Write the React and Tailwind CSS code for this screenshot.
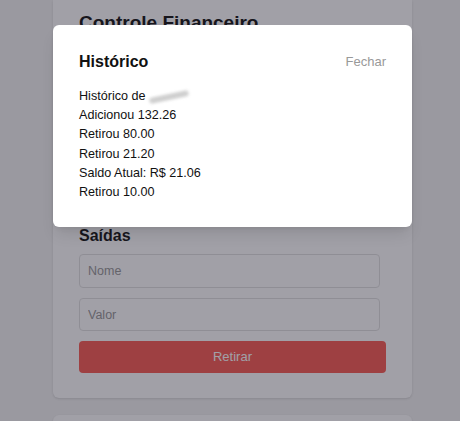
import { useState } from "react";

function Campo({ placeholder, alto }) {
  return (
    <input
      type="text"
      placeholder={placeholder}
      className={
        "block w-[301px] px-2 rounded border border-[#e2e2e2] bg-white text-[12.5px] text-[#333] placeholder:text-[#9a9a9a] outline-none " +
        (alto ? "h-[34px]" : "h-[33px]")
      }
    />
  );
}

function Secao({ titulo, botao, cor }) {
  return (
    <div className="flex flex-col">
      <h3 className="text-[16px] leading-[20px] font-bold text-[#1a1a1a] mb-[8px]">{titulo}</h3>
      <div className="flex flex-col gap-[10px]">
        <Campo placeholder="Nome" alto />
        <Campo placeholder="Valor" />
        <button className={"w-full h-[32px] rounded text-white text-[13px] " + cor}>{botao}</button>
      </div>
    </div>
  );
}

export default function App() {
  const [aberto, setAberto] = useState(true);

  const historico = [
    "Adicionou 132.26",
    "Retirou 80.00",
    "Retirou 21.20",
    "Saldo Atual: R$ 21.06",
    "Retirou 10.00",
  ];

  return (
    <div className="relative h-[421px] overflow-hidden bg-[#f4f4f4] font-['Liberation_Sans',Arial,sans-serif]">
      <div className="ml-[53px] w-[359px] flex flex-col gap-[17px]">
        {/* Card principal */}
        <div className="bg-white rounded-b-md shadow px-[26px] pt-[10px] pb-[25px] flex flex-col">
          <h2 className="text-[19px] leading-[26px] font-bold text-[#1a1a1a] mb-[24px]">Controle Financeiro</h2>
          <div className="mb-[19px]">
            <Secao titulo="Entradas" botao="Adicionar" cor="bg-[#4caf50]" />
          </div>
          <Secao titulo="Saídas" botao="Retirar" cor="bg-[#fa6057]" />
        </div>
        <div className="bg-white rounded-t-md shadow h-[40px]" />
      </div>

      {aberto && (
        <div className="absolute inset-0 bg-[rgba(20,18,35,0.4)]">
          <div className="absolute left-[53px] top-[25px] w-[359px] h-[202px] bg-white rounded-md shadow-lg px-[26px] pt-[25px]">
            <div className="flex items-center justify-between mb-[13px]">
              <h2 className="text-[16px] leading-[24px] font-bold text-[#111]">Histórico</h2>
              <button onClick={() => setAberto(false)} className="text-[13px] text-[#999]">
                Fechar
              </button>
            </div>
            <div className="text-[12.6px] leading-[19.2px] text-[#111]">
              <div className="flex items-center">
                Histórico de
                <span className="ml-[3px] inline-block w-[40px] h-[6px] rounded-full bg-[#cfcfcf] blur-[1.5px] -rotate-[12deg]" />
              </div>
              {historico.map((linha, i) => (
                <div key={i}>{linha}</div>
              ))}
            </div>
          </div>
        </div>
      )}
    </div>
  );
}
